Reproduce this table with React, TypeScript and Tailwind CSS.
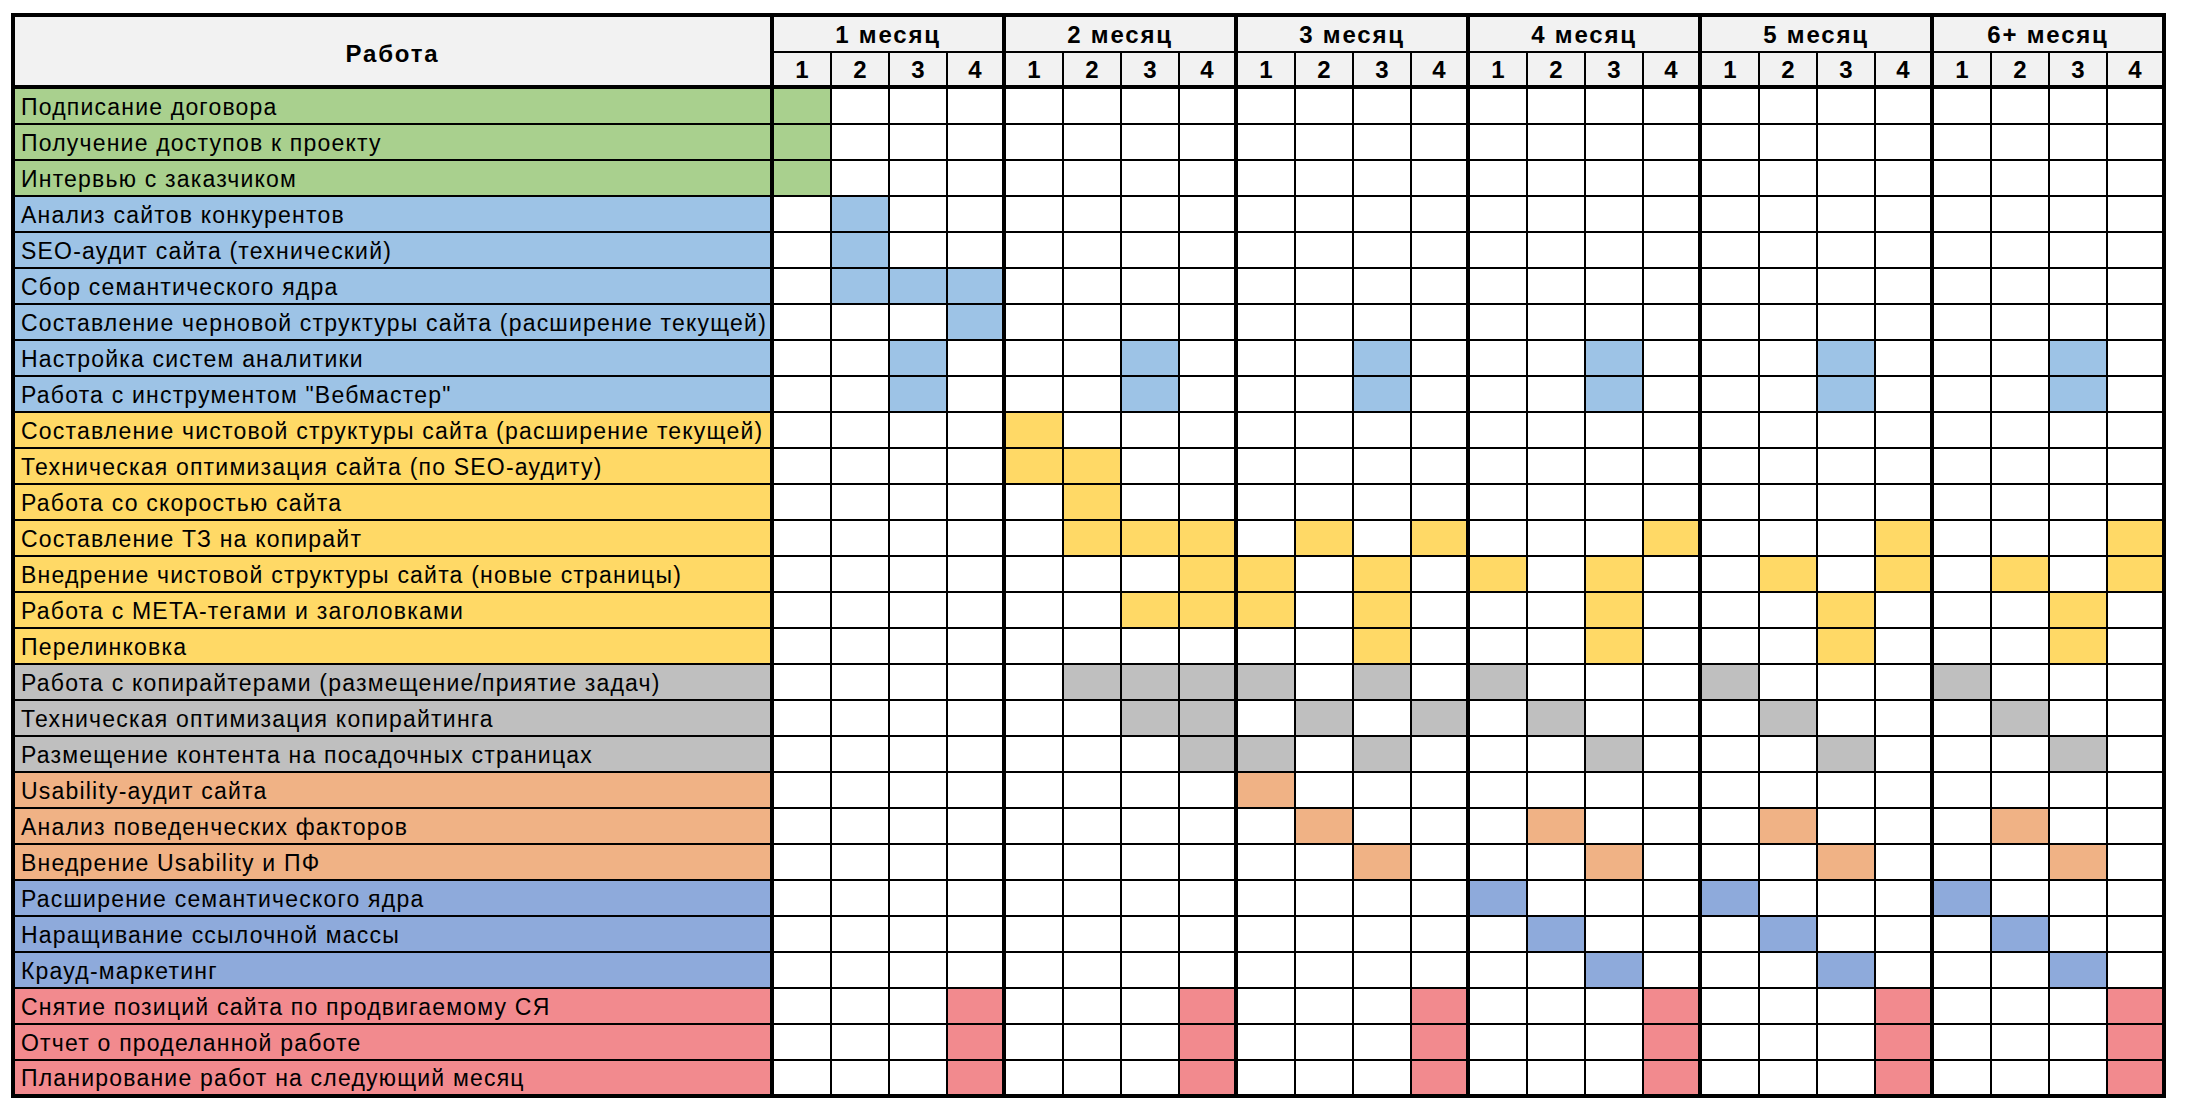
import React from "react";

type Row = { label: string; color: string; cols: number[] };

const C = {
  g: "bg-[#a9d08e]",
  b: "bg-[#9dc3e6]",
  y: "bg-[#ffd966]",
  s: "bg-[#bfbfbf]",
  o: "bg-[#f0b285]",
  v: "bg-[#8eaadb]",
  r: "bg-[#f28a8e]",
};

const rows: Row[] = [
  { label: "Подписание договора", color: C.g, cols: [1] },
  { label: "Получение доступов к проекту", color: C.g, cols: [1] },
  { label: "Интервью с заказчиком", color: C.g, cols: [1] },
  { label: "Анализ сайтов конкурентов", color: C.b, cols: [2] },
  { label: "SEO-аудит сайта (технический)", color: C.b, cols: [2] },
  { label: "Сбор семантического ядра", color: C.b, cols: [2, 3, 4] },
  { label: "Составление черновой структуры сайта (расширение текущей)", color: C.b, cols: [4] },
  { label: "Настройка систем аналитики", color: C.b, cols: [3, 7, 11, 15, 19, 23] },
  { label: "Работа с инструментом \"Вебмастер\"", color: C.b, cols: [3, 7, 11, 15, 19, 23] },
  { label: "Составление чистовой структуры сайта (расширение текущей)", color: C.y, cols: [5] },
  { label: "Техническая оптимизация сайта (по SEO-аудиту)", color: C.y, cols: [5, 6] },
  { label: "Работа со скоростью сайта", color: C.y, cols: [6] },
  { label: "Составление ТЗ на копирайт", color: C.y, cols: [6, 7, 8, 10, 12, 16, 20, 24] },
  { label: "Внедрение чистовой структуры сайта (новые страницы)", color: C.y, cols: [8, 9, 11, 13, 15, 18, 20, 22, 24] },
  { label: "Работа с META-тегами и заголовками", color: C.y, cols: [7, 8, 9, 11, 15, 19, 23] },
  { label: "Перелинковка", color: C.y, cols: [11, 15, 19, 23] },
  { label: "Работа с копирайтерами (размещение/приятие задач)", color: C.s, cols: [6, 7, 8, 9, 11, 13, 17, 21] },
  { label: "Техническая оптимизация копирайтинга", color: C.s, cols: [7, 8, 10, 12, 14, 18, 22] },
  { label: "Размещение контента на посадочных страницах", color: C.s, cols: [8, 9, 11, 15, 19, 23] },
  { label: "Usability-аудит сайта", color: C.o, cols: [9] },
  { label: "Анализ поведенческих факторов", color: C.o, cols: [10, 14, 18, 22] },
  { label: "Внедрение Usability и ПФ", color: C.o, cols: [11, 15, 19, 23] },
  { label: "Расширение семантического ядра", color: C.v, cols: [13, 17, 21] },
  { label: "Наращивание ссылочной массы", color: C.v, cols: [14, 18, 22] },
  { label: "Крауд-маркетинг", color: C.v, cols: [15, 19, 23] },
  { label: "Снятие позиций сайта по продвигаемому СЯ", color: C.r, cols: [4, 8, 12, 16, 20, 24] },
  { label: "Отчет о проделанной работе", color: C.r, cols: [4, 8, 12, 16, 20, 24] },
  { label: "Планирование работ на следующий месяц", color: C.r, cols: [4, 8, 12, 16, 20, 24] },
];

const months = ["1 месяц", "2 месяц", "3 месяц", "4 месяц", "5 месяц", "6+ месяц"];
const weeks = Array.from({ length: 24 }, (_, i) => i);

function weekWidth(i: number) {
  if (i === 23) return "w-[54px]";
  if (i % 4 === 3) return "w-[58px] border-r-4";
  return "w-[58px] border-r-2";
}

export default function App() {
  return (
    <div className="min-h-screen bg-white pl-[11px] pt-[13px] text-black" style={{ fontFamily: "'Liberation Sans', Arial, sans-serif" }}>
      <div className="w-[2155px] border-4 border-black">
        {/* header */}
        <div className="flex border-b-4 border-black bg-[#f2f2f2]">
          <div className="flex h-[68px] w-[759px] items-center justify-center border-r-4 border-black pt-[5px] text-[24px] font-bold tracking-[1.8px]">
            Работа
          </div>
          <div className="flex flex-col">
            <div className="flex h-[36px] border-b-2 border-black">
              {months.map((m, i) => (
                <div
                  key={m}
                  className={
                    i === 5
                      ? "flex w-[228px] items-center justify-center pt-[2px] text-[24px] font-bold tracking-[1.8px]"
                      : "flex w-[232px] items-center justify-center border-r-4 border-black pt-[2px] text-[24px] font-bold tracking-[1.8px]"
                  }
                >
                  {m}
                </div>
              ))}
            </div>
            <div className="flex h-[32px]">
              {weeks.map((i) => (
                <div
                  key={i}
                  className={`flex items-center justify-center border-black pt-[1px] text-[24px] font-bold ${weekWidth(i)}`}
                >
                  {(i % 4) + 1}
                </div>
              ))}
            </div>
          </div>
        </div>
        {/* body */}
        {rows.map((r, ri) => (
          <div
            key={ri}
            className={ri === rows.length - 1 ? "flex h-[33px]" : "flex h-[36px] border-b-2 border-black"}
          >
            <div
              className={`flex w-[759px] items-center whitespace-nowrap border-r-4 border-black pl-[6px] pt-[2px] text-[23px] tracking-[1.2px] ${r.color}`}
            >
              {r.label}
            </div>
            {weeks.map((i) => (
              <div
                key={i}
                className={`border-black ${weekWidth(i)} ${r.cols.includes(i + 1) ? r.color : "bg-white"}`}
              />
            ))}
          </div>
        ))}
      </div>
    </div>
  );
}
